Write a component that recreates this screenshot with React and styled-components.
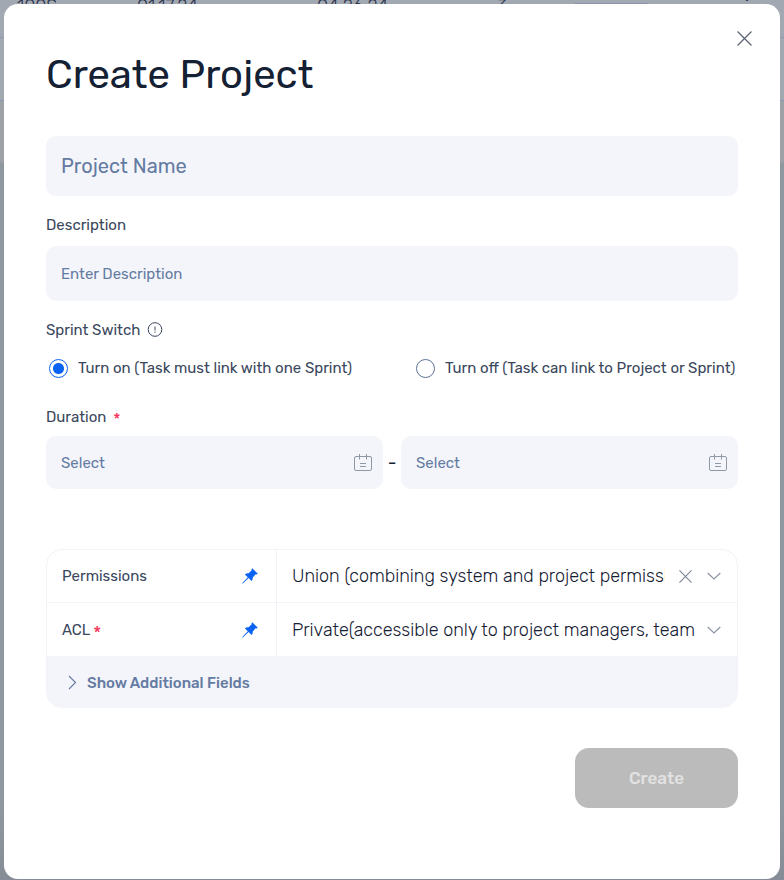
import React, { useState } from "react";
import styled, { createGlobalStyle } from "styled-components";

const GlobalStyle = createGlobalStyle`
  *, *::before, *::after { box-sizing: border-box; }
  body { margin: 0; font-family: Rubik, Roboto, "Liberation Sans", sans-serif; color: #142033; }
  button, input, select, textarea { font: inherit; color: inherit; }
`;

const Page = styled.div`
  display: grid;
  min-height: 100vh;
  background: linear-gradient(#9ea2a6 0 162px, #90989f 163px 800px, #858c97);
  & > * { grid-area: 1 / 1; }
`;

const Tasks = styled.div`
  height: 101px;
  color: #26304a;
  background: #a2a8b1;
  border-bottom: 1px solid #8d99b3;
`;

const TaskRow = styled.div`
  display: grid;
  grid-template-columns: 120px 180px 180px 76px 1fr 30px;
  height: 38px;
  padding: 0 16px 0 17px;
  border-bottom: 1px solid #8d99b3;
  font-size: 18px;
  font-weight: 300;
  line-height: 12px;
`;

const Progress = styled.span`
  width: 76px;
  height: 6px;
  margin-top: 3px;
  border-radius: 3px;
  background: #8b93a8;
`;

const Overlay = styled.div`
  display: flex;
  padding: 4px 4px 1px;
  z-index: 1;
`;

const Dialog = styled.form`
  display: flex;
  flex-direction: column;
  flex: 1;
  min-width: 0;
  padding: 22px 42px 70px;
  border-radius: 14px;
  background: #fff;
`;

const Header = styled.header`
  display: flex;
  justify-content: space-between;
  align-items: flex-start;
  height: 110px;
`;

const Title = styled.h1`
  margin: 25px 0 0;
  font-size: 40px;
  line-height: 48px;
  font-weight: 400;
`;

const IconButton = styled.button`
  display: flex;
  flex: none;
  padding: 0;
  border: 0;
  background: none;
  color: ${(p) => p.$color || "#7b8594"};
  cursor: pointer;
`;

const CloseButton = styled(IconButton)`
  margin: 5px -14px 0 0;
`;

const Icon = styled.svg`
  display: block;
  flex: none;
  fill: none;
  stroke: currentColor;
`;

const Label = styled.label`
  display: flex;
  align-items: center;
  height: 18px;
  font-size: 15px;
  line-height: 18px;
  color: #3a475c;
`;

const Legend = styled(Label).attrs({ as: "legend" })`
  gap: 7px;
  padding: 0;
`;

const Required = styled.span`
  color: #f5365c;
  margin-left: ${(p) => p.$gap || 0}px;
  font-size: ${(p) => (p.$gap ? 18 : 16)}px;
  line-height: 12px;
  padding-top: 6px;
`;

const TextField = styled.input`
  width: 100%;
  height: ${(p) => (p.$large ? 60 : 55)}px;
  padding: 0 15px;
  border: 0;
  border-radius: 10px;
  background: #f4f5fa;
  font-size: ${(p) => (p.$large ? 20 : 15)}px;
  outline-color: #0b63f3;
  &::placeholder { color: #647ba2; opacity: 1; }
`;

const Field = styled.div`
  display: flex;
  flex-direction: column;
  gap: 12px;
  margin-top: 20px;
`;

const Group = styled.fieldset`
  min-width: 0;
  margin: ${(p) => p.$top}px 0 0;
  padding: 0;
  border: 0;
`;

const RadioRow = styled.div`
  display: grid;
  grid-template-columns: 367px 1fr;
  margin-top: 19px;
  padding-left: 3px;
`;

const RadioLabel = styled.label`
  display: flex;
  align-items: center;
  gap: 10px;
  font-size: 15px;
  line-height: 20px;
  color: #3a475c;
  white-space: nowrap;
`;

const Radio = styled.input.attrs({ type: "radio" })`
  appearance: none;
  flex: none;
  width: 19px;
  height: 19px;
  margin: 0;
  border: 1px solid #5c7298;
  border-radius: 50%;
  background: #fff;
  &:checked {
    border-color: #0b63f3;
    background: radial-gradient(circle, #0b63f3 5px, #fff 6px);
  }
`;

const DateRow = styled.div`
  display: grid;
  grid-template-columns: 1fr 18px 1fr;
  align-items: center;
  margin-top: 10px;
`;

const DateBox = styled.div`
  display: flex;
  align-items: center;
  height: 53px;
  padding: 0 11px 0 15px;
  border-radius: 10px;
  background: #f4f5fa;
`;

const DateInput = styled.input`
  flex: 1;
  min-width: 0;
  padding: 0;
  border: 0;
  outline: 0;
  background: none;
  font-size: 15px;
  &::placeholder { color: #647ba2; opacity: 1; }
`;

const Dash = styled.span`
  text-align: center;
  font-size: 18px;
  line-height: 20px;
`;

const Settings = styled.section`
  margin-top: 60px;
  border: 1px solid #f2f3f8;
  border-radius: 16px;
  overflow: hidden;
`;

const SettingRow = styled.div`
  display: grid;
  grid-template-columns: 230px 1fr;
  height: ${(p) => (p.$last ? 54 : 53)}px;
  border-bottom: 1px solid #f2f3f8;
`;

const SettingName = styled.div`
  display: flex;
  align-items: center;
  justify-content: space-between;
  padding: 0 18px 0 15px;
  border-right: 1px solid #f2f3f8;
`;

const SettingValue = styled.div`
  display: flex;
  align-items: center;
  min-width: 0;
  padding: 0 16px 0 15px;
`;

const Select = styled.select`
  appearance: none;
  flex: 1;
  min-width: 0;
  padding: 0;
  border: 0;
  outline: 0;
  background: none;
  font-size: 18px;
  font-weight: 300;
  line-height: 24px;
  text-overflow: clip;
`;

const Adornments = styled.span`
  display: flex;
  align-items: center;
  gap: 15px;
  margin-left: ${(p) => (p.$wide ? 14 : 10)}px;
  color: #8a93a3;
`;

const MoreButton = styled.button.attrs({ type: "button" })`
  display: flex;
  align-items: center;
  gap: 10px;
  width: 100%;
  height: 50px;
  padding: 2px 21px 0;
  border: 0;
  background: #f4f5fa;
  color: #647ba2;
  font-size: 15px;
  font-weight: 500;
  cursor: pointer;
`;

const CreateButton = styled.button`
  align-self: flex-end;
  width: 163px;
  height: 60px;
  margin-top: 40px;
  border: 0;
  border-radius: 14px;
  background: #bbb;
  color: #e2e2e2;
  font-size: 17px;
  font-weight: 500;
`;

const Cross = ({ size }) => (
  <Icon width={size} height={size} viewBox="0 0 14 14" strokeWidth="1.2" aria-hidden="true">
    <path d="M.5.5l13 13M13.5.5l-13 13" />
  </Icon>
);

const Chevron = ({ right }) => (
  <Icon width={right ? 9 : 14} height={right ? 16 : 8} viewBox={right ? "0 0 9 16" : "0 0 14 8"} aria-hidden="true">
    <path d={right ? "M1 1L7.500 7.500 1 14" : "M.7 1L7 7l6.3-6"} strokeWidth="1.1" />
  </Icon>
);

const Calendar = () => (
  <Icon width="18" height="17" viewBox="0 0 18 17" aria-hidden="true">
    <rect x=".5" y="2.500" width="17" height="14" rx="1.500" />
    <path d="M5.500 0v5.500M12.500 0v5.500M6 9.500h6M6 12.500h6" />
  </Icon>
);

const Pin = () => (
  <Icon width="16" height="16" viewBox="0 0 16 16" aria-hidden="true">
    <path fill="currentColor" stroke="none" d="M10.300.200L15.800 5.700 14.700 6.500 13.700 6.300 10.700 9.400Q11 11.500 9.600 13.100L6.600 10.100.900 15.500.300 15.600.400 15 5.800 9.300 2.900 6.400Q4.500 5 6.600 5.300L9.700 2.300 9.500 1.200Z" />
  </Icon>
);

const Info = () => (
  <Icon width="16" height="16" viewBox="0 0 16 16" aria-hidden="true">
    <circle cx="8" cy="7.500" r="6.800" />
    <path d="M8 4.500v4M8 9.500v1.200" />
  </Icon>
);

function Setting({ id, name, value, required, clearable, last }) {
  return (
    <SettingRow $last={last}>
      <SettingName>
        <Label htmlFor={id}>
          {name}
          {required && <Required $gap={3}>*</Required>}
        </Label>
        <IconButton type="button" $color="#0b63f3" aria-label={`Pin ${name}`}>
          <Pin />
        </IconButton>
      </SettingName>
      <SettingValue>
        <Select id={id}>
          <option>{value}</option>
        </Select>
        <Adornments $wide={clearable}>
          {clearable && (
            <IconButton type="button" aria-label={`Clear ${name}`}>
              <Cross size={13} />
            </IconButton>
          )}
          <Chevron />
        </Adornments>
      </SettingValue>
    </SettingRow>
  );
}

function DateField({ label }) {
  return (
    <DateBox>
      <DateInput aria-label={label} placeholder="Select" />
      <IconButton type="button" $color="#8f98a5" aria-label={`Pick ${label}`}>
        <Calendar />
      </IconButton>
    </DateBox>
  );
}

export default function App() {
  const [sprint, setSprint] = useState("on");
  return (
    <Page>
      <GlobalStyle />
      <Tasks aria-hidden="true">
        <TaskRow>
          <span>100S</span>
          <span>01.17.24</span>
          <span>04.26.24</span>
          <span>3</span>
          <Progress />
          <span>⋮</span>
        </TaskRow>
      </Tasks>
      <Overlay>
        <Dialog role="dialog" aria-labelledby="title" onSubmit={(e) => e.preventDefault()}>
          <Header>
            <Title id="title">Create Project</Title>
            <CloseButton type="button" $color="#5d6674" aria-label="Close">
              <Cross size={15} />
            </CloseButton>
          </Header>
          <TextField $large aria-label="Project Name" placeholder="Project Name" />
          <Field>
            <Label htmlFor="description">Description</Label>
            <TextField id="description" placeholder="Enter Description" />
          </Field>
          <Group $top={20}>
            <Legend>
              Sprint Switch <Info />
            </Legend>
            <RadioRow>
              <RadioLabel>
                <Radio name="sprint" checked={sprint === "on"} onChange={() => setSprint("on")} />
                Turn on (Task must link with one Sprint)
              </RadioLabel>
              <RadioLabel>
                <Radio name="sprint" checked={sprint === "off"} onChange={() => setSprint("off")} />
                Turn off (Task can link to Project or Sprint)
              </RadioLabel>
            </RadioRow>
          </Group>
          <Group $top={30}>
            <Legend>
              Duration <Required>*</Required>
            </Legend>
            <DateRow>
              <DateField label="start date" />
              <Dash>-</Dash>
              <DateField label="end date" />
            </DateRow>
          </Group>
          <Settings>
            <Setting id="permissions" name="Permissions" value="Union (combining system and project permissions)" clearable />
            <Setting id="acl" name="ACL" value="Private(accessible only to project managers, team members)" required last />
            <MoreButton>
              <Chevron right />
              Show Additional Fields
            </MoreButton>
          </Settings>
          <CreateButton type="submit" disabled>
            Create
          </CreateButton>
        </Dialog>
      </Overlay>
    </Page>
  );
}
